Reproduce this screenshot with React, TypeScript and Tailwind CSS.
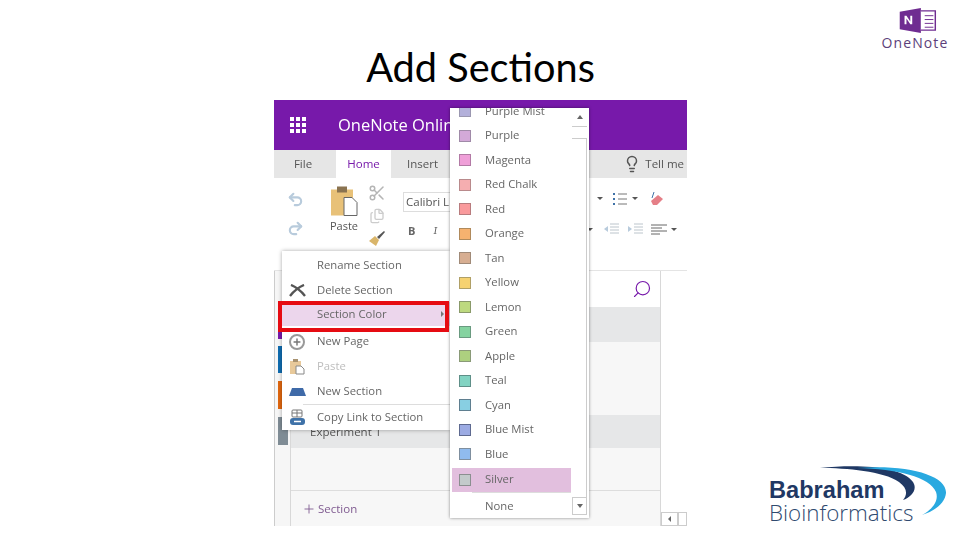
import { Undo2, Redo2, Scissors, Files, Lightbulb, Search, Plus } from "lucide-react";

const colors = [
  { name: "Purple", fill: "#d3a9d8", edge: "#a08aa8" },
  { name: "Magenta", fill: "#ef9fd8", edge: "#b27aa5" },
  { name: "Red Chalk", fill: "#f5aeb0", edge: "#b98a8c" },
  { name: "Red", fill: "#f99a9c", edge: "#b87c7e" },
  { name: "Orange", fill: "#f6b26f", edge: "#b08a5c" },
  { name: "Tan", fill: "#d7ae92", edge: "#a08a78" },
  { name: "Yellow", fill: "#f6d271", edge: "#b0a067" },
  { name: "Lemon", fill: "#bdd97f", edge: "#8a9a6a" },
  { name: "Green", fill: "#85d3a0", edge: "#6a9a80" },
  { name: "Apple", fill: "#add07f", edge: "#8a9a78" },
  { name: "Teal", fill: "#82d3c2", edge: "#5f8f88" },
  { name: "Cyan", fill: "#88cfe2", edge: "#5f7f90" },
  { name: "Blue Mist", fill: "#9cabe3", edge: "#5f6a90" },
  { name: "Blue", fill: "#90bbee", edge: "#7f8f9f" },
];

function Swatch({ fill, edge }: { fill: string; edge: string }) {
  return <span className="h-[12px] w-[12px] shrink-0 border" style={{ backgroundColor: fill, borderColor: edge }} />;
}

function MenuRow({ label, icon, muted }: { label: string; icon?: React.ReactNode; muted?: boolean }) {
  return (
    <div className="flex h-[25px] items-center">
      <span className="flex w-[35px] shrink-0 justify-center pr-[5px]">{icon}</span>
      <span className={muted ? "text-[#bdbdbd]" : "text-[#666]"}>{label}</span>
    </div>
  );
}

function ContextMenu() {
  return (
    <div className="absolute left-[8px] top-[151px] z-10 w-[168px] bg-white pt-[2px] text-[11.3px] shadow-[0_0_4px_rgba(0,0,0,0.35)]">
      <MenuRow label="Rename Section" />
      <div className="flex h-[24px] items-center">
        <span className="flex w-[35px] shrink-0 justify-center pr-[5px]">
          <svg width="17" height="13" viewBox="0 0 17 13">
            <path d="M2 1c5 2 10 6 14 11M15 1C10 3 5 7 1 12" fill="none" stroke="#555" strokeWidth="2.4" />
          </svg>
        </span>
        <span className="text-[#666]">Delete Section</span>
      </div>
      <div className="flex h-[24px] items-center bg-[#ecd6ec]">
        <span className="w-[35px] shrink-0" />
        <span className="flex-1 text-[#666]">Section Color</span>
        <span className="mr-[6px] h-0 w-0 border-y-[3px] border-l-[3px] border-y-transparent border-l-[#777]" />
      </div>
      <div className="h-[3px]" />
      <MenuRow
        label="New Page"
        icon={
          <span className="flex h-[16px] w-[16px] items-center justify-center rounded-full border-2 border-[#999]">
            <Plus size={10} strokeWidth={3.5} className="text-[#777]" />
          </span>
        }
      />
      <MenuRow
        label="Paste"
        muted
        icon={
          <svg width="16" height="16" viewBox="0 0 16 16">
            <rect x="1" y="2" width="11" height="13" fill="#e8c99a" />
            <rect x="4" y="0" width="5" height="3" fill="#a89270" />
            <path d="M7 7h5l3 3v5H7z" fill="#fff" stroke="#888" />
          </svg>
        }
      />
      <MenuRow
        label="New Section"
        icon={
          <svg width="17" height="8" viewBox="0 0 17 8">
            <path d="M3 0h11l3 8H0z" fill="#3f6aa8" />
          </svg>
        }
      />
      <div className="ml-[21px] border-t border-[#ddd]" />
      <div className="flex h-[25px] items-center">
        <span className="flex w-[35px] shrink-0 justify-center pr-[5px]">
          <svg width="17" height="17" viewBox="0 0 17 17">
            <rect x="3" y="1" width="10" height="7" rx="1" fill="none" stroke="#777" />
            <path d="M3 4h10M8 1v7" stroke="#777" />
            <rect x="1" y="9" width="15" height="7" rx="3" fill="#3f72a8" />
            <path d="M5 12.5h7" stroke="#fff" strokeWidth="1.5" />
          </svg>
        </span>
        <span className="text-[#666]">Copy Link to Section</span>
      </div>
    </div>
  );
}

function ColorMenu() {
  return (
    <div className="absolute left-[176px] top-[8px] z-20 h-[410px] w-[139px] overflow-hidden bg-white text-[11.3px] shadow-[0_0_3px_rgba(0,0,0,0.45)]">
      <div className="-mt-[9px] flex flex-col">
        {[{ name: "Purple Mist", fill: "#b3b0da", edge: "#9a97b0" }, ...colors].map((c) => (
          <div key={c.name} className="flex h-[24.5px] items-center pl-[9px]">
            <Swatch fill={c.fill} edge={c.edge} />
            <span className="ml-[14px] text-[#666]">{c.name}</span>
          </div>
        ))}
        <div className="ml-[2px] mt-[1px] flex h-[24px] w-[119px] items-center bg-[#e2bfde] pl-[7px]">
          <Swatch fill="#c3cacb" edge="#8b8f90" />
          <span className="ml-[14px] text-[#666]">Silver</span>
        </div>
        <div className="ml-[22px] mr-[18px] border-t border-[#ddd]" />
        <div className="flex h-[27px] items-center pl-[35px] text-[#666]">None</div>
      </div>
      <div className="absolute right-[2px] top-0 flex h-[407px] w-[15px] flex-col">
        <div className="flex h-[19px] items-center justify-center border-b border-[#ccc] bg-white">
          <span className="h-0 w-0 border-x-[3px] border-b-[4px] border-x-transparent border-b-[#666]" />
        </div>
        <div className="h-[11px] bg-white" />
        <div className="flex-1 border-r border-t border-[#ccc]" />
        <div className="flex h-[18px] items-center justify-center border border-[#ccc] bg-white">
          <span className="h-0 w-0 border-x-[3px] border-t-[4px] border-x-transparent border-t-[#666]" />
        </div>
      </div>
    </div>
  );
}

function Ribbon() {
  return (
    <div className="flex h-[93px] border-b border-[#e4e4e4] bg-white">
      <div className="flex w-[45px] flex-col items-center gap-[12px] pr-[2px] pt-[13px] text-[#b8cbdc]">
        <Undo2 size={17} strokeWidth={3} />
        <Redo2 size={17} strokeWidth={3} />
      </div>
      <div className="flex w-[48px] flex-col items-center pl-[2px] pt-[8px]">
        <svg width="28" height="31" viewBox="0 0 28 30">
          <rect x="1" y="3" width="22" height="26" fill="#e8c178" />
          <rect x="7" y="0" width="10" height="6" fill="#8a7350" />
          <path d="M14 11h8l5 5v13H14z" fill="#fff" stroke="#666" />
        </svg>
        <span className="mt-[1px] text-[11px] text-[#555]">Paste</span>
      </div>
      <div className="flex w-[20px] flex-col items-center gap-[6px] pt-[6px] text-[#b5b5b5]">
        <Scissors size={18} />
        <Files size={16} className="text-[#ccc]" />
        <svg width="18" height="16" viewBox="0 0 18 16">
          <path d="M1 11l6-5 4 4-3 6z" fill="#d9b56a" />
          <path d="M9 7l7-6 1 1-6 7z" fill="#555" />
        </svg>
      </div>
      <div className="ml-[16px] flex w-[60px] shrink-0 flex-col pt-[14px]">
        <div className="flex h-[20px] items-center border border-[#ddd] pl-[2px] text-[11.5px] text-[#555]">Calibri Li</div>
        <div className="flex gap-[18px] pl-[5px] pt-[11px] text-[11px] text-[#666]">
          <span className="font-bold">B</span>
          <span className="font-serif italic">I</span>
        </div>
      </div>
      <div className="ml-[124px] flex flex-col gap-[17px] pt-[13px]">
        <div className="flex items-center pl-[10px]">
          <span className="h-0 w-0 border-x-[3px] border-t-[3px] border-x-transparent border-t-[#555]" />
          <svg className="ml-[9px]" width="16" height="14" viewBox="0 0 16 14">
            <path d="M1 2h2M1 7h2M1 12h2" stroke="#3f72a8" strokeWidth="2" />
            <path d="M6 2h9M6 7h9M6 12h9" stroke="#777" />
          </svg>
          <span className="ml-[4px] h-0 w-0 border-x-[3px] border-t-[3px] border-x-transparent border-t-[#555]" />
          <svg className="ml-[11px]" width="16" height="15" viewBox="0 0 16 15">
            <path d="M2 10l7-6 5 4-6 6H4z" fill="#e57f87" />
            <path d="M5 1l-2 6" stroke="#3f72a8" />
          </svg>
        </div>
        <div className="flex items-center">
          <span className="h-0 w-0 border-x-[3px] border-t-[3px] border-x-transparent border-t-[#555]" />
          <svg className="ml-[10px]" width="16" height="12" viewBox="0 0 16 12">
            <path d="M7 1h9M7 4h9M7 7h9M7 10h9" stroke="#bcc5cc" />
            <path d="M5 3L1 6l4 3" fill="#b8cbdc" />
          </svg>
          <svg className="ml-[8px]" width="16" height="12" viewBox="0 0 16 12">
            <path d="M7 1h9M7 4h9M7 7h9M7 10h9" stroke="#bcc5cc" />
            <path d="M1 3l4 3-4 3" fill="#b8cbdc" />
          </svg>
          <svg className="ml-[8px]" width="16" height="11" viewBox="0 0 16 11">
            <path d="M0 1h16M0 4h11M0 7h16M0 10h9" stroke="#666" />
          </svg>
          <span className="ml-[4px] h-0 w-0 border-x-[3px] border-t-[3px] border-x-transparent border-t-[#555]" />
        </div>
      </div>
    </div>
  );
}

function Screenshot() {
  return (
    <div className="relative h-[426px] w-[413px] overflow-hidden bg-white font-['Open_Sans',sans-serif] blur-[0.3px]">
      <div className="flex h-[50px] items-center bg-[#7719aa] pl-[16px] text-white">
        <div className="grid w-[16px] grid-cols-3 gap-[1.5px]">
          {Array.from({ length: 9 }).map((_, i) => (
            <span key={i} className="h-[4.3px] bg-white" />
          ))}
        </div>
        <span className="ml-[32px] whitespace-nowrap text-[16.5px]">OneNote Online</span>
      </div>
      <div className="flex h-[28px] items-center bg-[#e6e6e6] text-[11.5px] text-[#555]">
        <span className="w-[62px] pr-[4px] text-center">File</span>
        <span className="flex h-full w-[55px] items-center justify-center bg-white text-[#7719aa]">Home</span>
        <span className="ml-[16px]">Insert</span>
        <div className="ml-auto flex items-center gap-[4px] pr-[3px]">
          <Lightbulb size={18} className="text-[#555]" />
          <span className="whitespace-nowrap">Tell me</span>
        </div>
      </div>
      <Ribbon />
      <div className="flex h-[255px]">
        <div className="flex w-[16px] shrink-0 flex-col border-l border-[#ccc] bg-[#f6f6f6] pl-[3px] pt-[58px]">
          <span className="h-[10px] bg-[#7719aa]" />
          <span className="mt-[7px] h-[27px] bg-[#0f6cb0]" />
          <span className="mt-[8px] h-[28px] bg-[#e1670f]" />
          <span className="mt-[8px] h-[28px] w-[10px] bg-[#7f8c95]" />
        </div>
        <div className="flex w-[371px] shrink-0 flex-col border-x border-[#d8d8d8] bg-[#f7f7f7]">
          <div className="flex h-[36px] shrink-0 items-center justify-end bg-white pr-[8px] text-[#7719aa]">
            <Search size={20} className="-scale-x-100" strokeWidth={1.4} />
          </div>
          <div className="h-[35px] shrink-0 bg-[#e6e7e8]" />
          <div className="h-[73px] shrink-0" />
          <div className="flex h-[33px] shrink-0 items-end bg-[#e6e7e8] pb-[8px] pl-[19px] text-[11.5px] text-[#555]">Experiment 1</div>
          <div className="h-[43px] shrink-0 border-b border-[#ddd]" />
          <div className="flex flex-1 items-center gap-[2px] pl-[11px] text-[11.5px] text-[#7f5a90]">
            <Plus size={14} strokeWidth={1.5} />
            <span>Section</span>
          </div>
        </div>
        <div className="flex flex-1 items-end">
          <span className="flex h-[14px] w-[17px] items-center justify-center border border-[#ccc]">
            <span className="h-0 w-0 border-y-[3px] border-r-[3px] border-y-transparent border-r-[#666]" />
          </span>
          <span className="h-[14px] flex-1 border border-[#ccc]" />
        </div>
      </div>
      <ContextMenu />
      <ColorMenu />
      <div className="absolute left-[4px] top-[201px] z-30 h-[31px] w-[171px] border-[4px] border-[#e60b12]" />
    </div>
  );
}

export default function App() {
  return (
    <div className="grid h-[540px] w-[960px] grid-cols-[274px_413px_273px] grid-rows-[100px_426px_14px] overflow-hidden bg-white">
      <div />
      <div className="flex items-center justify-center pt-[33px]">
        <h1 className="whitespace-nowrap font-['Lato',sans-serif] text-[39.7px] text-black">Add Sections</h1>
      </div>
      <div className="flex flex-col items-end pr-[10px] pt-[8px]">
        <div className="flex w-[70px] flex-col items-center">
          <svg className="ml-[6px]" width="38" height="25" viewBox="0 0 38 26">
            <path d="M0 4L22 0v26L0 22z" fill="#6f2c91" />
            <path d="M5 17V8h2l4 6V8h2v9h-2L7 11v6z" fill="#fff" />
            <path d="M22 3h15v20H22" fill="#fff" stroke="#6f2c91" strokeWidth="1.5" />
            <path d="M26 8h9M26 12h9M26 16h9M26 20h9" stroke="#6f2c91" />
          </svg>
          <span className="mt-[3px] whitespace-nowrap font-['Open_Sans',sans-serif] text-[14px] leading-[14px] tracking-[1.1px] text-[#5c3f7a]">OneNote</span>
        </div>
      </div>
      <div />
      <Screenshot />
      <div className="relative flex flex-col justify-end pb-[1px] pl-[82px]">
        <svg className="absolute left-[130px] top-[365px]" width="132" height="54" viewBox="0 0 132 54">
          <path d="M3 3C40 -1 85 1 96 17C101 25 94 32 86 35C91 29 90 23 82 17C66 6 30 3 3 3z" fill="#1f3864" />
          <path d="M40 3C90 -1 130 10 129 28C128 38 118 46 105 50C116 44 122 36 119 27C113 12 80 4 40 3z" fill="#29a9e0" />
        </svg>
        <span className="font-['Liberation_Sans',sans-serif] text-[23.6px] font-bold leading-[22px] text-[#1f3864]">Babraham</span>
        <span className="whitespace-nowrap font-['Open_Sans',sans-serif] text-[22.4px] font-light leading-[24px] text-[#2f4a6f]">Bioinformatics</span>
      </div>
    </div>
  );
}
